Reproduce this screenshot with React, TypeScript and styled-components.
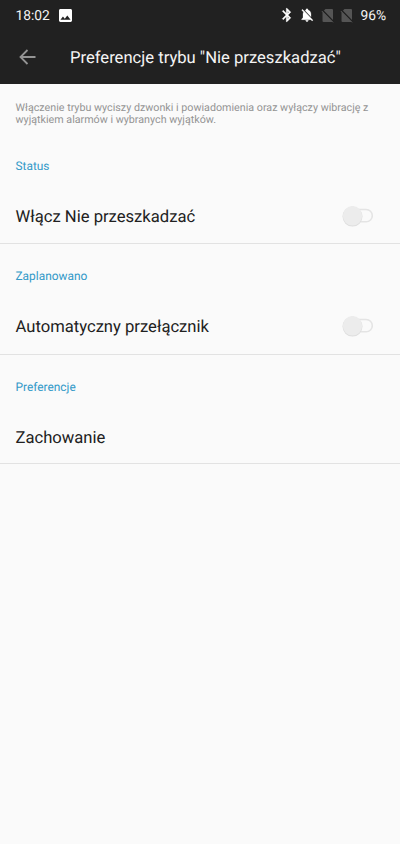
import React from 'react';
import styled, { createGlobalStyle } from 'styled-components';

const Global = createGlobalStyle`
  * { box-sizing: border-box; }
  body { margin: 0; background: #fafafa; font-family: Roboto, sans-serif; color: #212121; text-rendering: geometricPrecision; }
`;
const Screen = styled.div`width: 400px; height: 844px; overflow: hidden; background: #fafafa;`;
const StatusBar = styled.div`
  height: 30px; padding: 0 14px 0 15.5px; display: flex; align-items: center; justify-content: space-between;
  background: #212121; color: #f4f4f4; font-size: 13.8px; line-height: 30px;
`;
const StatusGroup = styled.div`display: flex; align-items: center; height: 30px;`;
const Clock = styled.span`width: 43.5px; padding-top: 2px; white-space: nowrap;`;
const Battery = styled.span`width: 25.5px; margin-left: 8px; padding-top: 2px; white-space: nowrap;`;
const Glyph = styled.svg<{ $gap?: number }>`display: block; flex: none; margin-left: ${p => p.$gap ?? 0}px;`;
const AppBar = styled.header`
  height: 54px; padding: 0 19px; display: flex; align-items: center; background: #212121; color: #f4f4f4;
`;
const BackIcon = styled.svg`width: 18px; height: 18px; display: block; margin-right: 33px;`;
const Title = styled.h1`margin: 0; padding-top: 4px; font-size: 16.62px; font-weight: 400; line-height: 24px; white-space: nowrap;`;
const Description = styled.p`
  margin: 0; height: 50px; padding: 17.5px 15.5px 0; font-size: 10.72px; line-height: 12.5px; color: #949494; white-space: nowrap;
`;
const Section = styled.section<{ $height?: number }>`
  height: ${p => p.$height ?? 110}px; border-bottom: 1px solid #e2e2e2; padding: 24px 26px 0 15.5px;
`;
const SectionTitle = styled.h2`margin: 0; font-size: 11.9px; font-weight: 400; line-height: 16px; color: #3299c8;`;
const Row = styled.div`height: 54px; margin-top: 15px; display: flex; align-items: center; justify-content: space-between;`;
const Label = styled.span`padding-top: 4px; font-size: 16.62px; line-height: 24px; white-space: nowrap;`;
const Toggle = styled.svg`width: 34px; height: 24px; display: block;`;

const Switch = () => (
  <Toggle viewBox="0 0 34 24">
    <rect x="10" y="5.5" width="22.3" height="12.3" rx="6.15" fill="none" stroke="#e4e4e4" strokeWidth="1.6" />
    <circle cx="12.5" cy="12.6" r="10" fill="#dedede" />
    <circle cx="12.5" cy="11.8" r="9.7" fill="#ececec" />
  </Toggle>
);
const NoSim = ({ gap }: { gap: number }) => (
  <Glyph $gap={gap} width="13" height="15" viewBox="0 0 13 15">
    <path d="M4.5 1H11Q12 1 12 2V14H2.5Q1.5 14 1.5 13V4Z" fill="#555" />
    <path d="M1.8 2.6L12.5 13.5" stroke="#212121" strokeWidth="1.5" />
    <path d="M.8 3L12 14.4" stroke="#555" strokeWidth="1" />
  </Glyph>
);

export default function App() {
  return (
    <>
      <Global />
      <Screen>
        <StatusBar>
          <StatusGroup>
            <Clock>18:02</Clock>
            <Glyph width="13" height="13" viewBox="3 3 18 18" fill="#fff">
              <path d="M21 19V5c0-1.1-.9-2-2-2H5c-1.1 0-2 .9-2 2v14c0 1.1.9 2 2 2h14c1.1 0 2-.9 2-2zM8.5 13.5l2.5 3.01L14.5 12l4.5 6H5l3.5-4.5z" />
            </Glyph>
          </StatusGroup>
          <StatusGroup>
            <Glyph width="16" height="16" viewBox="0 0 24 24" fill="#fff" stroke="#fff" strokeWidth=".7">
              <path d="M17.71 7.71L12 2h-1v7.59L6.41 5 5 6.41 10.59 12 5 17.59 6.41 19 11 14.41V22h1l5.71-5.71-4.3-4.29 4.3-4.29zM13 5.83l1.88 1.88L13 9.59V5.83zm1.88 10.46L13 18.17v-3.76l1.88 1.88z" />
            </Glyph>
            <Glyph $gap={4} width="16" height="16" viewBox="0 0 24 24" fill="#fff" stroke="#fff" strokeWidth=".4">
              <path d="M20 18.69L7.84 6.14 5.27 3.49 4 4.76l2.8 2.8v.01c-.52.99-.8 2.16-.8 3.42v5l-2 2v1h13.73l2 2L21 19.72l-1-1.03zM12 22c1.11 0 2-.89 2-2h-4c0 1.11.89 2 2 2zm6-7.32V11c0-3.08-1.64-5.64-4.5-6.32V4c0-.83-.67-1.5-1.5-1.5s-1.5.67-1.5 1.5v.68c-.15.03-.29.08-.42.12-.1.03-.2.07-.3.11h-.01c-.01 0-.01 0-.02.01-.23.09-.46.2-.68.31 0 0-.01 0-.01.01L18 14.68z" />
            </Glyph>
            <NoSim gap={6} />
            <NoSim gap={6} />
            <Battery>96%</Battery>
          </StatusGroup>
        </StatusBar>
        <AppBar>
          <BackIcon viewBox="0 0 18 18" fill="none" stroke="#949494" strokeWidth="1.8"><path d="M16.5 9H2M8.5 2L1.5 9L8.5 16" /></BackIcon>
          <Title>Preferencje trybu "Nie przeszkadzać"</Title>
        </AppBar>
        <Description>Włączenie trybu wyciszy dzwonki i powiadomienia oraz wyłączy wibrację z<br />wyjątkiem alarmów i wybranych wyjątków.</Description>
        <Section><SectionTitle>Status</SectionTitle><Row><Label>Włącz Nie przeszkadzać</Label><Switch /></Row></Section>
        <Section $height={111}><SectionTitle>Zaplanowano</SectionTitle><Row><Label>Automatyczny przełącznik</Label><Switch /></Row></Section>
        <Section $height={109}><SectionTitle>Preferencje</SectionTitle><Row><Label>Zachowanie</Label></Row></Section>
      </Screen>
    </>
  );
}
